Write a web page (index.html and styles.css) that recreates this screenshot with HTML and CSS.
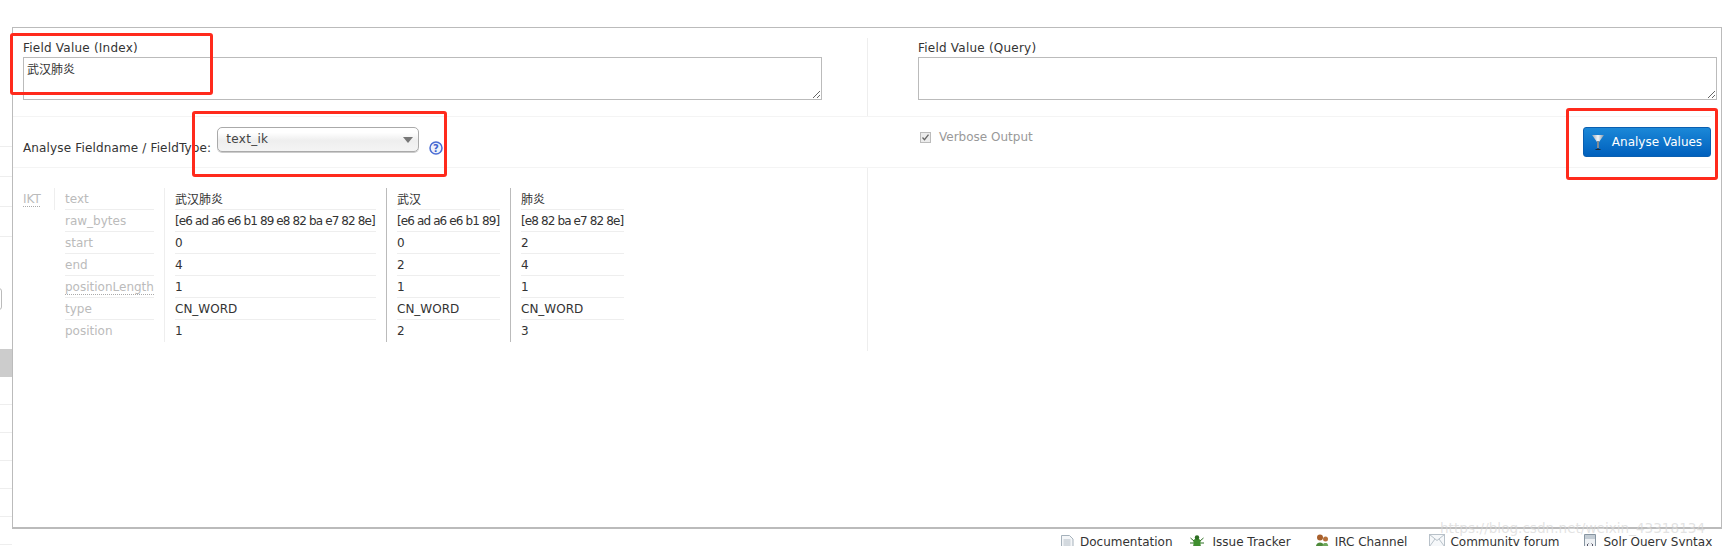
FILE: index.html
```html
<!DOCTYPE html>
<html lang="en">
<head>
<meta charset="utf-8">
<title>Analysis</title>
<link rel="stylesheet" href="styles.css">
</head>
<body>
<div class="page">
  <aside class="side">
    <div class="side-top"></div>
    <div class="side-top"></div>
    <div class="side-top"></div>
    <div class="side-top"></div>
    <div class="side-select"></div>
    <div class="side-active"></div>
    <div class="side-row"></div>
    <div class="side-row"></div>
    <div class="side-row"></div>
    <div class="side-row"></div>
    <div class="side-row"></div>
    <div class="side-row"></div>
  </aside>
  <main class="frame">
    <section class="values">
      <div class="value-col left">
        <label class="field-label">Field Value (Index)</label>
        <textarea class="area" spellcheck="false">武汉肺炎</textarea>
      </div>
      <div class="value-col right">
        <label class="field-label">Field Value (Query)</label>
        <textarea class="area" spellcheck="false"></textarea>
      </div>
    </section>
    <section class="controls">
      <div class="ctrl-left">
        <span class="ctrl-label">Analyse Fieldname / FieldType:</span>
        <div class="select"><span>text_ik</span><i class="caret"></i></div>
        <svg class="help" width="16" height="16" viewBox="0 0 16 16"><circle cx="8" cy="8" r="6" fill="#eef2fb" stroke="#4a6cd4" stroke-width="1.5"/><text x="8" y="11.5" text-anchor="middle" class="help-q">?</text></svg>
      </div>
      <div class="ctrl-right">
        <label class="verbose"><span class="check"><svg width="11" height="11" viewBox="0 0 11 11"><rect x=".5" y=".5" width="10" height="10" fill="#ececec" stroke="#bbb"/><path d="M2.500 5.500l2 2.200 4-5" fill="none" stroke="#666" stroke-width="1.300"/></svg></span>Verbose Output</label>
        <button class="go" type="button"><svg width="12" height="15" viewBox="0 0 12 15"><defs><linearGradient id="fn" x1="0" x2="1" y1="0" y2="0"><stop offset="0" stop-color="#8fa3b5"/><stop offset=".5" stop-color="#f2f5f8"/><stop offset="1" stop-color="#7f93a6"/></linearGradient></defs><path d="M0 0h12L7 7v6H5V7z" fill="url(#fn)"/><path d="M5.500 6h1v8h-1z" fill="#1c2a36"/><path d="M3.500 14.500h5" stroke="#1c2a36"/></svg>Analyse Values</button>
      </div>
    </section>
    <section class="results">
      <div class="analysis">
        <div class="tok-name">IKT</div>
        <div class="attr-col">
          <div class="cell attr">text</div>
          <div class="cell attr">raw_bytes</div>
          <div class="cell attr">start</div>
          <div class="cell attr">end</div>
          <div class="cell attr dotted"><span>positionLength</span></div>
          <div class="cell attr">type</div>
          <div class="cell attr last">position</div>
        </div>
        <div class="tok first">
          <div class="cell cjk">武汉肺炎</div>
          <div class="cell bytes">[e6 ad a6 e6 b1 89 e8 82 ba e7 82 8e]</div>
          <div class="cell">0</div>
          <div class="cell">4</div>
          <div class="cell">1</div>
          <div class="cell">CN_WORD</div>
          <div class="cell last">1</div>
        </div>
        <div class="tok">
          <div class="cell cjk">武汉</div>
          <div class="cell bytes">[e6 ad a6 e6 b1 89]</div>
          <div class="cell">0</div>
          <div class="cell">2</div>
          <div class="cell">1</div>
          <div class="cell">CN_WORD</div>
          <div class="cell last">2</div>
        </div>
        <div class="tok">
          <div class="cell cjk">肺炎</div>
          <div class="cell bytes">[e8 82 ba e7 82 8e]</div>
          <div class="cell">2</div>
          <div class="cell">4</div>
          <div class="cell">1</div>
          <div class="cell">CN_WORD</div>
          <div class="cell last">3</div>
        </div>
      </div>
    </section>
  </main>
  <footer class="foot">
    <a class="link l-doc"><svg width="14" height="16" viewBox="0 0 14 16"><path d="M.5 1.500h8l3.500 3.500v11h-11.500z" fill="#f4f6f8" stroke="#a5b1bb"/><path d="M2.500 6h7M2.500 8h7M2.500 10h7M2.500 12h7" stroke="#b3bdc6"/></svg>Documentation</a>
    <a class="link l-bug"><svg width="17" height="16" viewBox="0 0 17 16"><ellipse cx="8" cy="9" rx="3.800" ry="5" fill="#3f8f2f"/><circle cx="8" cy="3.500" r="2.200" fill="#2d6e22"/><path d="M1.500 4l3.500 3M14.500 4l-3.500 3M1 9h3M15 9h-3M2 14l3-2.500M14 14l-3-2.500" stroke="#2d6e22"/></svg>Issue Tracker</a>
    <a class="link l-irc"><svg width="15" height="16" viewBox="0 0 15 16"><circle cx="5" cy="3.500" r="3" fill="#a8602c"/><path d="M.5 16c0-6 2-7.500 4.500-7.500s4.500 1.500 4.500 7.500z" fill="#4e8a3a"/><circle cx="10.500" cy="5" r="2.500" fill="#b5703a"/><path d="M7 16c0-6 1.500-7 3.500-7s3 1 3 7z" fill="#6fa85c"/></svg>IRC Channel</a>
    <a class="link l-mail"><svg width="16" height="14" viewBox="0 0 16 14"><rect x=".5" y=".5" width="15" height="12" fill="#f6f8fa" stroke="#b8c1c9"/><path d="M.5 .5l7.500 6 7.500-6M.5 12.500l5.500-7.500M15.500 12.500l-5.500-7.500" fill="none" stroke="#b8c1c9"/></svg>Community forum</a>
    <a class="link l-solr"><svg width="15" height="16" viewBox="0 0 15 16"><path d="M1.500.5h11v15h-11z" fill="#eef1f4" stroke="#8795a1"/><path d="M2 1h10v4h-10z" fill="#c3ccd4"/><path d="M5.500 9.500l-1.500 1.500 1.500 1.500M8.500 9.500l1.500 1.500-1.500 1.500" fill="none" stroke="#556"/></svg>Solr Query Syntax</a>
  </footer>
  <div class="mark mark-a"></div>
  <div class="mark mark-b"></div>
  <div class="mark mark-c"></div>
  <div class="watermark">https://blog.csdn.net/weixin_43318134</div>
</div>
</body>
</html>
```
FILE: styles.css
```css
* { box-sizing: border-box; }
html, body { margin: 0; height: 546px; overflow: hidden; background: #fff; }
body { font: 12px/16px "DejaVu Sans", Verdana, sans-serif; color: #333; }
.page { position: relative; width: 1722px; height: 546px; overflow: hidden; padding-top: 27px; }
.side { position: absolute; left: 0; top: 0; width: 12px; height: 546px; padding-top: 117px; }
.side-top { height: 30px; border-bottom: 1px solid #eee; }
.side-select { position: absolute; top: 288px; left: -6px; width: 8px; height: 22px; border: 1px solid #bbb; border-radius: 3px; }
.side-active { margin-top: 112px; height: 28px; background: #ccc; }
.side-row { height: 28px; border-bottom: 1px solid #eee; }
.frame { margin-left: 12px; width: 1710px; height: 502px; border: 1px solid #bbb; border-width: 1px 1px 2px 1px; display: flex; flex-direction: column; }
.values { display: flex; height: 89px; margin-right: 10px; border-bottom: 1px solid #f4f4f4; }
.value-col { display: flex; flex-direction: column; margin-top: 10px; }
.value-col.left { width: 855px; padding-left: 10px; padding-right: 45px; border-right: 1px solid #eee; }
.value-col.right { flex: 1; padding-left: 50px; margin-right: -6px; }
.field-label { display: block; height: 19px; line-height: 20px; color: #333; letter-spacing: .22px; }
.area { display: block; width: 100%; height: 43px; border: 1px solid #bbb; padding: 4px 3px; font: 12px/16px "DejaVu Sans", "Noto Sans CJK SC", sans-serif; color: #333; resize: both; outline: none; background: #fff; }
.controls { display: flex; height: 51px; margin-right: 10px; border-bottom: 1px solid #f4f4f4; }
.ctrl-left { width: 855px; padding-left: 10px; display: flex; align-items: flex-start; }
.ctrl-label { margin-top: 23px; letter-spacing: .15px; }
.select { margin-top: 10px; margin-left: 6px; width: 202px; height: 25px; border: 1px solid #aaa; border-radius: 5px; background: linear-gradient(#fff 20%, #eee 55%, #f4f4f4); box-shadow: 0 1px 0 #ccc; padding: 3px 8px; display: flex; justify-content: space-between; color: #444; letter-spacing: .3px; }
.caret { margin-top: 6px; margin-right: -3px; border: 5px solid transparent; border-top: 6px solid #777; border-bottom: 0; }
.help { margin-top: 23px; margin-left: 9px; }
.help-q { font: bold 10px "DejaVu Sans", sans-serif; fill: #3f63cf; }
.ctrl-right { flex: 1; padding-left: 52px; display: flex; justify-content: space-between; align-items: flex-start; }
.verbose { margin-top: 12px; display: flex; align-items: center; color: #999; }
.check { width: 11px; height: 11px; margin-right: 8px; display: flex; }
.go { margin-top: 10px; width: 128px; height: 30px; border: 1px solid #0a5fb0; border-radius: 3px; background: linear-gradient(#1b88d8, #0060bd); color: #fff; font: 12px "DejaVu Sans", sans-serif; padding: 0; display: flex; align-items: center; justify-content: center; gap: 8px; }
.results { flex: 1; display: flex; }
.analysis { width: 855px; height: 183px; border-right: 1px solid #eee; padding: 20px 0 0 10px; display: flex; align-items: flex-start; }
.tok-name { width: 32px; height: 22px; line-height: 22px; color: #bbb; border-right: 1px solid #eee; text-decoration: underline dotted #aaa; text-underline-offset: 3px; }
.attr-col { width: 110px; padding: 0 10px; border-right: 1px solid #eee; }
.tok { padding: 0 0 0 10px; margin-right: 10px; border-left: 1px solid #bbb; min-width: 114px; }
.tok.first { border-left: 0; width: 211px; }
.cell { height: 22px; line-height: 22px; border-bottom: 1px solid #eee; white-space: nowrap; color: #333; }
.cell.last { border-bottom: 0; }
.cell.attr { color: #bbb; }
.bytes { letter-spacing: -.88px; }
.dotted span { border-bottom: 1px dotted #aaa; }
.cjk { font-family: "Noto Sans CJK SC", sans-serif; }
.foot { display: flex; padding: 5px 0 0 1061px; white-space: nowrap; }
.link { display: flex; align-items: flex-start; gap: 5px; color: #333; margin-right: 21px; flex: none; }
.l-doc { margin-right: 16px; }
.l-bug { gap: 7px; margin-right: 24px; }
.l-irc { margin-right: 22px; }
.l-mail { margin-right: 24px; }
.mark { position: absolute; border: 3px solid #ff2a1c; border-radius: 3px; }
.mark-a { left: 10px; top: 33px; width: 203px; height: 62px; }
.mark-b { left: 192px; top: 111px; width: 255px; height: 66px; }
.mark-c { left: 1566px; top: 108px; width: 152px; height: 72px; }
.watermark { position: absolute; left: 1440px; top: 519px; font: 13.600px/18px "DejaVu Sans", sans-serif; color: rgba(215,215,215,.7); white-space: nowrap; }
```
